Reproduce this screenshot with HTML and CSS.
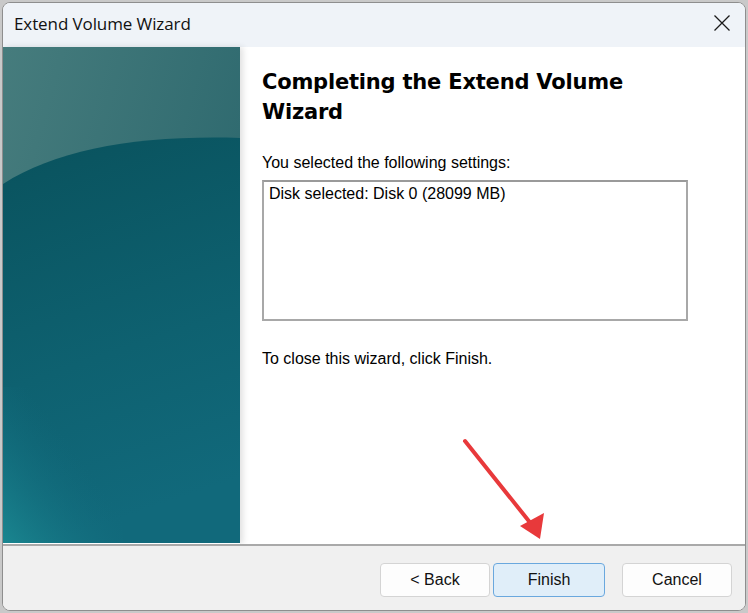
FILE: index.html
```html
<!DOCTYPE html>
<html lang="en">
<head>
    <meta charset="UTF-8">
    <meta name="viewport" content="width=device-width, initial-scale=1.0">
    <title>Extend Volume Wizard</title>
    <link rel="stylesheet" href="styles.css">
</head>
<body>
    <div class="wizard">
        <div class="wizard_title">
            <p class="wizard_caption">Extend Volume Wizard</p>
            <svg class="wizard_close" width="18" height="18" viewBox="0 0 18 18">
                <path d="M1.5 1.5 L16.5 16.5 M16.5 1.5 L1.5 16.5" stroke="#1a1a1a" stroke-width="1.3" fill="none"/>
            </svg>
        </div>

        <div class="wizard_main">
            <div class="wizard_side">
                <!-- side art: teal panel with the lighter sweep on top -->
                <svg width="237" height="496" viewBox="0 0 237 496" preserveAspectRatio="none">
                    <defs>
                        <linearGradient id="top_part" x1="0" y1="0" x2="1" y2="0.6">
                            <stop offset="0" stop-color="#467c7d"/>
                            <stop offset="1" stop-color="#2b676d"/>
                        </linearGradient>
                        <linearGradient id="low_part" x1="0" y1="0" x2="0.2" y2="1">
                            <stop offset="0" stop-color="#09525d"/>
                            <stop offset="0.6" stop-color="#0e6170"/>
                            <stop offset="1" stop-color="#11697b"/>
                        </linearGradient>
                        <linearGradient id="corner" x1="0" y1="1" x2="0.6" y2="0.4">
                            <stop offset="0" stop-color="#1a8690"/>
                            <stop offset="1" stop-color="#11697b" stop-opacity="0"/>
                        </linearGradient>
                    </defs>
                    <rect width="237" height="496" fill="url(#top_part)"/>
                    <path d="M0 137 C 55 102, 135 88, 237 91 L237 496 L0 496 Z" fill="url(#low_part)"/>
                    <rect x="0" y="340" width="120" height="156" fill="url(#corner)"/>
                </svg>
            </div>

            <div class="wizard_content">
                <h1 class="wizard_heading">Completing the Extend Volume Wizard</h1>
                <p class="wizard_text">You selected the following settings:</p>
                <div class="wizard_box">Disk selected: Disk 0 (28099 MB)</div>
                <p class="wizard_text wizard_close_hint">To close this wizard, click Finish.</p>

                <!-- red pointer onto the Finish button -->
                <svg class="wizard_arrow" width="100" height="110" viewBox="0 0 100 110">
                    <line x1="5" y1="4" x2="72" y2="88" stroke="#e8393b" stroke-width="4" stroke-linecap="round"/>
                    <polygon points="60,89 84,76 80,102" fill="#e8393b"/>
                </svg>
            </div>
        </div>

        <div class="wizard_footer">
            <button class="wizard_button">&lt; Back</button>
            <button class="wizard_button wizard_button_default">Finish</button>
            <button class="wizard_button wizard_button_cancel">Cancel</button>
        </div>
    </div>
</body>
</html>
```

FILE: styles.css
```css
body {
    margin: 0;
    padding: 0;
    background-color: #c9c9c9;
    font-family: "Liberation Sans", Arial, sans-serif;
}

.wizard {
    margin: 2px;
    width: 744px;
    height: 609px;
    box-sizing: border-box;
    border: 1px solid #8e8e8e;
    border-radius: 8px;
    overflow: hidden;
    background-color: #ffffff;
    display: flex;
    flex-direction: column;
}

.wizard_title {
    height: 44px;
    flex-shrink: 0;
    background-color: #eff3f8;
    display: flex;
    align-items: center;
    justify-content: space-between;
    padding: 0 14px 4px 11px;
    box-sizing: border-box;
}

.wizard_caption {
    margin: 0;
    font-family: "Open Sans", "Noto Sans", sans-serif;
    font-size: 17px;
    color: #111111;
    letter-spacing: -0.1px;
}

.wizard_main {
    flex: 1;
    display: flex;
    flex-direction: row;
}

.wizard_side {
    width: 237px;
    flex-shrink: 0;
    line-height: 0;
    box-shadow: 3px 0 6px rgba(0, 0, 0, 0.12);
}

.wizard_content {
    position: relative;
    flex: 1;
    padding: 20px 0 0 22px;
}

.wizard_heading {
    margin: 0 0 26px 0;
    width: 400px;
    font-family: "DejaVu Sans", Verdana, sans-serif;
    font-weight: bold;
    font-size: 21px;
    line-height: 30px;
    letter-spacing: -0.2px;
    color: #000000;
}

.wizard_text {
    margin: 0 0 8px 0;
    font-size: 16px;
    line-height: 19px;
    color: #000000;
}

.wizard_box {
    width: 412px;
    height: 129px;
    border: 2px solid #a8a8a8;
    border-top-color: #9a9a9a;
    padding: 2px 5px 6px 5px;
    font-size: 16px;
    line-height: 19px;
    color: #000000;
}

.wizard_close_hint {
    margin-top: 28px;
}

.wizard_arrow {
    position: absolute;
    left: 220px;
    top: 390px;
}

.wizard_footer {
    height: 66px;
    flex-shrink: 0;
    border-top: 2px solid #a9a9a9;
    background-color: #f0f0f0;
    display: flex;
    align-items: center;
    justify-content: flex-end;
    padding: 4px 13px 0 0;
    box-sizing: border-box;
}

.wizard_button {
    width: 110px;
    height: 34px;
    margin-left: 3px;
    background-color: #fdfdfd;
    border: 1px solid #d4d4d4;
    border-radius: 4px;
    font-family: "Liberation Sans", Arial, sans-serif;
    font-size: 16px;
    color: #111111;
}

.wizard_button_default {
    width: 112px;
    background-color: #e0eef9;
    border-color: #6aa8de;
}

.wizard_button_cancel {
    margin-left: 17px;
}
```
